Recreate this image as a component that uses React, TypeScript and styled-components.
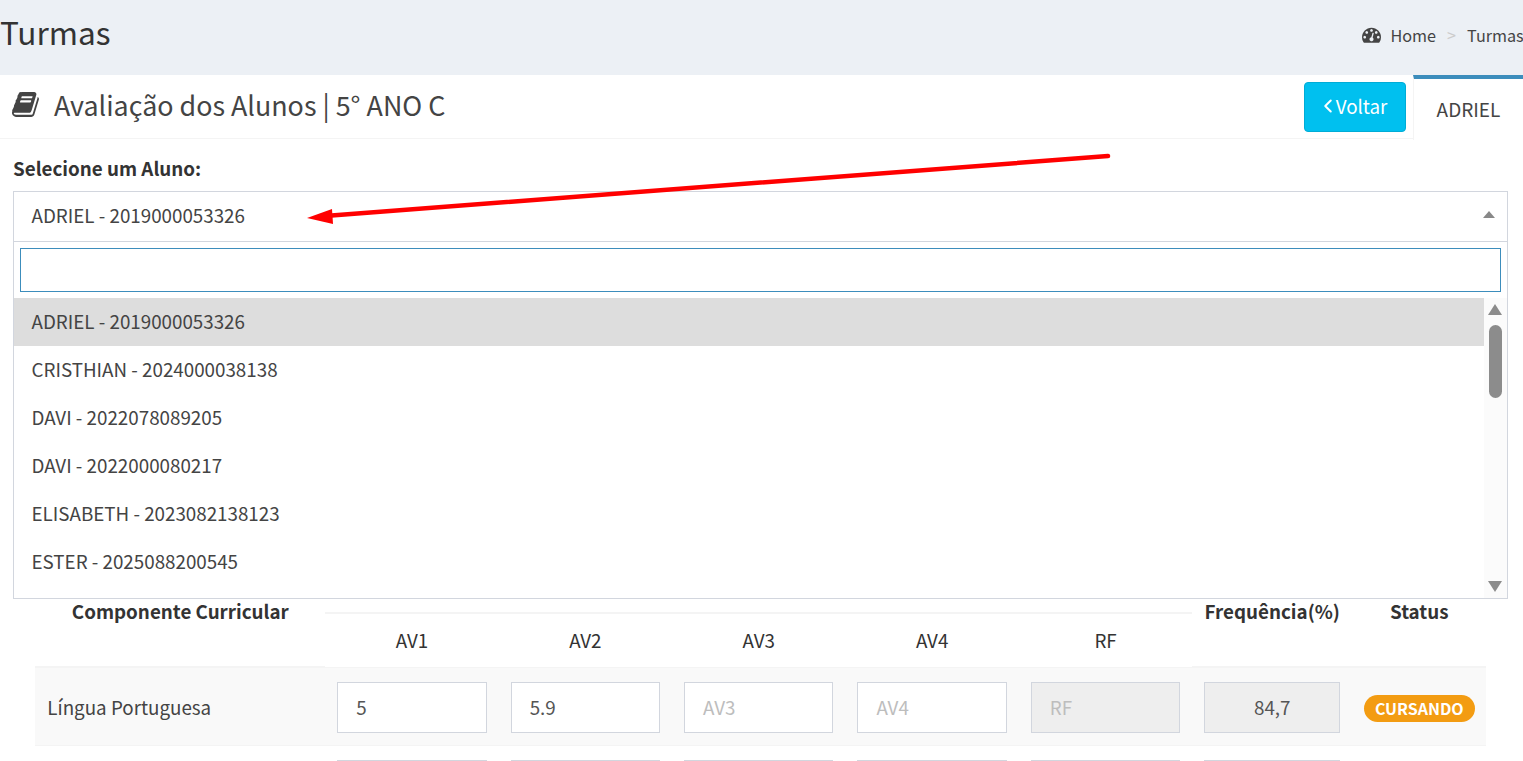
import React from "react";
import styled, { createGlobalStyle } from "styled-components";
import { ChevronLeft } from "lucide-react";

const students = [
  "ADRIEL - 2019000053326",
  "CRISTHIAN - 2024000038138",
  "DAVI - 2022078089205",
  "DAVI - 2022000080217",
  "ELISABETH - 2023082138123",
  "ESTER - 2025088200545",
];

const gradeColumns = ["AV1", "AV2", "AV3", "AV4", "RF"];

const GlobalStyle = createGlobalStyle`
  html, body {
    margin: 0;
    height: 100%;
    overflow: hidden;
    background: #fff;
  }
  body {
    font-family: "Noto Sans CJK SC", "Noto Sans", sans-serif;
    font-size: 18.8px;
    color: #333;
  }
  * { box-sizing: border-box; }
`;

const Page = styled.div`
  position: relative;
  height: 100vh;
  overflow: hidden;
`;

const PageHeader = styled.div`
  height: 75px;
  background: #ecf0f5;
  display: flex;
  align-items: center;
  justify-content: space-between;
`;

const PageTitle = styled.h1`
  margin: 0 0 14px;
  font-size: 31.6px;
  line-height: 40px;
  font-weight: 400;
  color: #333;
`;

const Breadcrumb = styled.div`
  width: 161.5px;
  display: flex;
  align-items: center;
  font-size: 16.2px;
  line-height: 24px;
  color: #444;
  white-space: nowrap;
  margin-bottom: 6px;
`;

const Separator = styled.span`
  color: #ccc;
  margin: 0 11px;
`;

const GaugeIcon = styled.svg`
  width: 19px;
  height: 19px;
  margin-right: 10px;
  fill: #444;
  flex: none;
`;

const BoxHeader = styled.div`
  height: 64px;
  display: flex;
  align-items: flex-start;
  background: #fff;
  border-bottom: 1px solid #f4f4f4;
`;

const BoxTitle = styled.h3`
  margin: 0;
  flex: 1;
  height: 59px;
  display: flex;
  align-items: center;
  padding-left: 12px;
  font-size: 26.85px;
  line-height: 36px;
  font-weight: 400;
  color: #444;
`;

const BookIcon = styled.svg`
  width: 29px;
  height: 29px;
  margin-right: 13px;
  fill: #444;
  flex: none;
`;

const BackButton = styled.button`
  width: 102px;
  height: 50px;
  margin: 7px 7px 0 0;
  display: flex;
  align-items: center;
  justify-content: center;
  padding: 0 0 3px 0;
  border: 1px solid #00acd6;
  border-radius: 4px;
  background: #00c0ef;
  color: #fff;
  font: inherit;
  font-size: 18.8px;

  svg {
    margin: 0 -3px 0 -6px;
  }
`;

const Tab = styled.div`
  width: 110px;
  height: 65px;
  border-top: 4px solid #3c8dbc;
  border-left: 1px solid #f4f4f4;
  background: #fff;
  display: flex;
  align-items: center;
  justify-content: center;
  color: #444;
  font-size: 19px;
  padding-bottom: 3px;
`;

const BoxBody = styled.div`
  padding: 16px 15px 0 13px;
`;

const FieldLabel = styled.label`
  display: block;
  line-height: 26px;
  font-weight: 700;
  margin-bottom: 10px;
`;

const SelectWrap = styled.div`
  position: relative;
  height: 51px;
`;

const SelectBox = styled.div`
  height: 51px;
  display: flex;
  align-items: center;
  justify-content: space-between;
  padding: 0 12px 4px 17.5px;
  border: 1px solid #d2d6de;
  color: #444;
  background: #fff;
`;

const Triangle = styled.span<{ $down?: boolean; $half: number; $tall: number; $color: string }>`
  width: 0;
  height: 0;
  flex: none;
  border-left: ${(p) => p.$half}px solid transparent;
  border-right: ${(p) => p.$half}px solid transparent;
  ${(p) =>
    p.$down
      ? `border-top: ${p.$tall}px solid ${p.$color};`
      : `border-bottom: ${p.$tall}px solid ${p.$color};`}
`;

const Dropdown = styled.div`
  position: absolute;
  z-index: 2;
  top: 51px;
  left: 0;
  right: 0;
  height: 357px;
  background: #fff;
  border: 1px solid #d2d6de;
  border-top: 0;
  display: flex;
  flex-direction: column;
`;

const SearchField = styled.div`
  height: 44px;
  margin: 6px 6px 6px;
  border: 1px solid #3c8dbc;
  flex: none;
`;

const ResultsArea = styled.div`
  flex: 1;
  display: flex;
  min-height: 0;
`;

const OptionList = styled.div`
  flex: 1;
`;

const Option = styled.div<{ $active?: boolean }>`
  height: 48px;
  display: flex;
  align-items: center;
  padding: 0 0 4px 17.5px;
  color: #444;
  background: ${(p) => (p.$active ? "#ddd" : "transparent")};
`;

const ScrollTrack = styled.div`
  width: 23px;
  background: #fbfbfb;
  display: flex;
  flex-direction: column;
  align-items: flex-start;
  padding: 6px 0 6px 4px;
`;

const ScrollThumb = styled.div`
  width: 13px;
  height: 73px;
  margin: 10px 0 auto 1px;
  border-radius: 7px;
  background: #8c8c8c;
`;

const TableWrap = styled.div`
  margin: 349px 0 0 35.3px;
`;

const Grades = styled.table`
  width: 1451px;
  table-layout: fixed;
  border-collapse: collapse;
`;

const HeadCell = styled.th`
  padding: 0;
  vertical-align: top;
  line-height: 24px;
  font-weight: 700;
  height: 22px;
  border-bottom: 2px solid #f4f4f4;
`;

const TitleCell = styled(HeadCell)`
  padding-top: 8px;
`;

const SubHeadCell = styled.th`
  padding: 0 0 2px;
  height: 54px;
  font-weight: 400;
  color: #333;
  border-bottom: 1px solid #f4f4f4;
`;

const Cell = styled.td`
  padding: 14px 12px 12px;
  border-bottom: 1px solid #f4f4f4;
  color: #444;
`;

const NameCell = styled(Cell)`
  padding: 12px 12px 13px;
`;

const Row = styled.tr<{ $striped?: boolean }>`
  background: ${(p) => (p.$striped ? "#f9f9f9" : "#fff")};

  & + & td {
    padding-top: 12px;
  }
`;

const GradeInput = styled.div<{ $disabled?: boolean; $empty?: boolean; $center?: boolean }>`
  height: 51px;
  display: flex;
  align-items: center;
  justify-content: ${(p) => (p.$center ? "center" : "flex-start")};
  padding: 0 18px 2px;
  border: 1px solid #d2d6de;
  background: ${(p) => (p.$disabled ? "#eee" : "#fff")};
  color: ${(p) => (p.$empty ? "#bdbdbd" : "#555")};
`;

const StatusCell = styled.td`
  padding: 2px 0 0;
  text-align: center;
  border-bottom: 1px solid #f4f4f4;
`;

const StatusBadge = styled.span`
  display: inline-block;
  height: 27px;
  padding: 0 11px;
  border-radius: 14px;
  background: #f39c12;
  color: #fff;
  font-size: 16px;
  line-height: 27px;
  font-weight: 700;
`;

const ArrowMark = styled.svg`
  position: absolute;
  z-index: 3;
  top: 0;
  left: 0;
  width: 1523px;
  height: 761px;
  pointer-events: none;
`;

const Gauge = () => (
  <GaugeIcon viewBox="0 0 1792 1792">
    <path d="M384 1152q0-53-37.5-90.5t-90.5-37.5-90.5 37.5-37.5 90.5 37.5 90.5 90.5 37.5 90.5-37.5 37.5-90.5zm192-448q0-53-37.5-90.5t-90.5-37.5-90.5 37.5-37.5 90.5 37.5 90.5 90.5 37.5 90.5-37.5 37.5-90.5zm428 481l101-382q6-26-7.5-48.5t-38.5-29.5-48 6.5-30 39.5l-101 382q-60 5-107 43.5t-63 98.5q-20 77 20 146t117 89 146-20 89-117q16-60-6-117t-72-91zm660-33q0-53-37.5-90.5t-90.5-37.5-90.5 37.5-37.5 90.5 37.5 90.5 90.5 37.5 90.5-37.5 37.5-90.5zm-640-640q0-53-37.5-90.5t-90.5-37.5-90.5 37.5-37.5 90.5 37.5 90.5 90.5 37.5 90.5-37.5 37.5-90.5zm448 192q0-53-37.5-90.5t-90.5-37.5-90.5 37.5-37.5 90.5 37.5 90.5 90.5 37.5 90.5-37.5 37.5-90.5zm320 448q0 261-141 483-19 29-54 29h-1402q-35 0-54-29-141-221-141-483 0-182 71-348t191-286 286-191 348-71 348 71 286 191 191 286 71 348z" />
  </GaugeIcon>
);

const Book = () => (
  <BookIcon viewBox="0 0 1792 1792">
    <path d="M1639 478q40 57 18 129l-275 906q-19 64-76.5 107.5t-122.5 43.5h-923q-77 0-148.5-53.5t-99.5-131.5q-24-67-2-127 0-4 3-27t4-37q1-8-3-21.5t-3-19.5q2-11 8-21t16.5-23.5 16.5-23.5q23-38 45-91.5t30-91.5q3-10 .5-30t-.5-28q3-11 17-28t17-23q21-36 42-92t25-90q1-9-2.5-32t.5-28q4-13 22-30.5t22-22.5q19-26 42.5-84.5t27.5-96.5q1-8-3-25.5t-2-26.5q2-8 9-18t18-23 17-21q8-12 16.5-30.5t15-35 16-36 19.5-32 26.5-23.5 36-11.5 47.5 5.5l-1 3q38-9 51-9h761q74 0 114 56t18 130l-274 906q-36 119-71.5 153.5t-128.5 34.5h-869q-27 0-38 15-11 16-1 43 24 70 144 70h923q29 0 56-15.5t35-41.5l300-987q7-22 5-57 38 15 59 43zm-1064 2q-4 13 2 22.5t20 9.5h608q13 0 25.5-9.5t16.5-22.5l21-64q4-13-2-22.5t-20-9.5h-608q-13 0-25.5 9.5t-16.5 22.5zm-83 256q-4 13 2 22.5t20 9.5h608q13 0 25.5-9.5t16.5-22.5l21-64q4-13-2-22.5t-20-9.5h-608q-13 0-25.5 9.5t-16.5 22.5z" />
  </BookIcon>
);

const App: React.FC = () => {
  return (
    <Page>
      <GlobalStyle />
      <PageHeader>
        <PageTitle>Turmas</PageTitle>
        <Breadcrumb>
          <Gauge />
          Home
          <Separator>&gt;</Separator>
          Turmas
        </Breadcrumb>
      </PageHeader>

      <BoxHeader>
        <BoxTitle>
          <Book />
          Avaliação dos Alunos | 5° ANO C
        </BoxTitle>
        <BackButton>
          <ChevronLeft size={22} strokeWidth={2.2} />
          Voltar
        </BackButton>
        <Tab>ADRIEL</Tab>
      </BoxHeader>

      <BoxBody>
        <FieldLabel>Selecione um Aluno:</FieldLabel>
        <SelectWrap>
          <SelectBox>
            {students[0]}
            <Triangle $half={6} $tall={7} $color="#888" />
          </SelectBox>
          <Dropdown>
            <SearchField />
            <ResultsArea>
              <OptionList>
                {students.map((student, index) => (
                  <Option key={index} $active={index === 0}>
                    {student}
                  </Option>
                ))}
              </OptionList>
              <ScrollTrack>
                <Triangle $half={7.5} $tall={11} $color="#8c8c8c" />
                <ScrollThumb />
                <Triangle $down $half={7.5} $tall={11} $color="#8c8c8c" />
              </ScrollTrack>
            </ResultsArea>
          </Dropdown>
        </SelectWrap>
      </BoxBody>

      <TableWrap>
        <Grades>
          <colgroup>
            <col style={{ width: 290 }} />
            {gradeColumns.map((column) => (
              <col key={column} style={{ width: 173.4 }} />
            ))}
            <col style={{ width: 160 }} />
            <col style={{ width: 134 }} />
          </colgroup>
          <thead>
            <tr>
              <TitleCell rowSpan={2}>Componente Curricular</TitleCell>
              <HeadCell colSpan={5} />
              <TitleCell rowSpan={2}>Frequência(%)</TitleCell>
              <TitleCell rowSpan={2}>Status</TitleCell>
            </tr>
            <tr>
              {gradeColumns.map((column) => (
                <SubHeadCell key={column}>{column}</SubHeadCell>
              ))}
            </tr>
          </thead>
          <tbody>
            <Row $striped>
              <NameCell>Língua Portuguesa</NameCell>
              <Cell>
                <GradeInput>5</GradeInput>
              </Cell>
              <Cell>
                <GradeInput>5.9</GradeInput>
              </Cell>
              <Cell>
                <GradeInput $empty>AV3</GradeInput>
              </Cell>
              <Cell>
                <GradeInput $empty>AV4</GradeInput>
              </Cell>
              <Cell>
                <GradeInput $empty $disabled>
                  RF
                </GradeInput>
              </Cell>
              <Cell>
                <GradeInput $disabled $center>
                  84,7
                </GradeInput>
              </Cell>
              <StatusCell>
                <StatusBadge>CURSANDO</StatusBadge>
              </StatusCell>
            </Row>
            <Row>
              <Cell />
              {gradeColumns.map((column) => (
                <Cell key={column}>
                  <GradeInput $disabled={column === "RF"} />
                </Cell>
              ))}
              <Cell>
                <GradeInput $disabled />
              </Cell>
              <StatusCell />
            </Row>
          </tbody>
        </Grades>
      </TableWrap>

      <ArrowMark viewBox="0 0 1523 761">
        <line x1="1108" y1="156" x2="325" y2="216" stroke="#ff0000" strokeWidth="4.5" strokeLinecap="round" />
        <polygon points="307,218 332,209 333,224" fill="#ff0000" />
      </ArrowMark>
    </Page>
  );
};

export default App;
